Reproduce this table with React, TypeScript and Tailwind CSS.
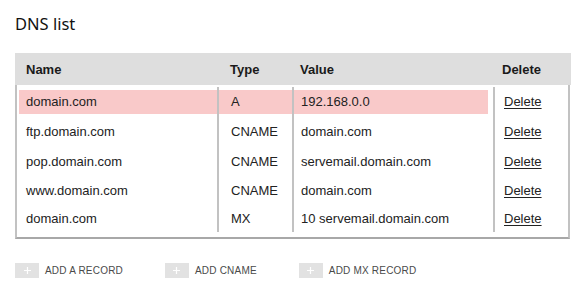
import React from "react";

const rows = [
  { name: "domain.com", type: "A", value: "192.168.0.0", h: "h-[29px]", hl: true },
  { name: "ftp.domain.com", type: "CNAME", value: "domain.com", h: "h-[31px]", hl: false },
  { name: "pop.domain.com", type: "CNAME", value: "servemail.domain.com", h: "h-[29px]", hl: false },
  { name: "www.domain.com", type: "CNAME", value: "domain.com", h: "h-[29px]", hl: false },
  { name: "domain.com", type: "MX", value: "10 servemail.domain.com", h: "h-[27px]", hl: false },
];

function Plus() {
  return (
    <div className="w-[24px] h-[15px] bg-[#e2e2e2] flex items-center justify-center">
      <svg width="9" height="9" viewBox="0 0 9 9">
        <path d="M4.5 1v7M1 4.5h7" stroke="#ffffff" strokeWidth="1.2" />
      </svg>
    </div>
  );
}

function AddBtn({ label }: { label: string }) {
  return (
    <div className="flex items-center gap-[6px]">
      <Plus />
      <span className="text-[10px] leading-[15px] tracking-[0.2px] text-[#4a4a4a]" style={{ fontFamily: '"Liberation Sans", Arial, sans-serif' }}>
        {label}
      </span>
    </div>
  );
}

export default function App() {
  const arial = { fontFamily: '"Liberation Sans", Arial, sans-serif' };
  return (
    <div className="w-[588px] h-[295px] bg-white text-[#222]" style={arial}>
      <div className="pt-[12px] pl-[15px] text-[16.5px] leading-[24px] text-[#111]" style={{ fontFamily: '"Noto Sans", "Open Sans", sans-serif' }}>
        DNS list
      </div>
      <div className="mt-[17px] ml-[15px] w-[556px]">
        <div className="grid grid-cols-[202px_75px_201px_78px] h-[32px] items-center pt-[1px] bg-[#dedede] text-[13px] font-bold text-[#1a1a1a]">
          <div className="pl-[11px]">Name</div>
          <div className="pl-[13px]">Type</div>
          <div className="pl-[8px]">Value</div>
          <div className="pl-[9px]">Delete</div>
        </div>
        <div className="w-[555px] border-l-2 border-r-2 border-b-2 border-l-[#c2c2c2] border-r-[#c2c2c2] border-b-[#a8a8a8] pt-[2px] pb-[5px] flex text-[13px]">
          <div className="w-[200px] flex flex-col">
            {rows.map((r, i) => (
              <div key={i} className={`${r.h} flex items-center pl-[2px]`}>
                <div className={`h-[24px] w-full flex items-center pl-[7px] ${r.hl ? "bg-[#f9c9c9]" : ""}`}>{r.name}</div>
              </div>
            ))}
          </div>
          <div className="w-[75px] border-l-2 border-[#c2c2c2] flex flex-col">
            {rows.map((r, i) => (
              <div key={i} className={`${r.h} flex items-center`}>
                <div className={`h-[24px] w-full flex items-center pl-[12px] ${r.hl ? "bg-[#f9c9c9]" : ""}`}>{r.type}</div>
              </div>
            ))}
          </div>
          <div className="w-[201px] border-l-2 border-[#c2c2c2] flex flex-col">
            {rows.map((r, i) => (
              <div key={i} className={`${r.h} flex items-center pr-[5px]`}>
                <div className={`h-[24px] w-full flex items-center pl-[7px] ${r.hl ? "bg-[#f9c9c9]" : ""}`}>{r.value}</div>
              </div>
            ))}
          </div>
          <div className="flex-1 border-l-2 border-[#c2c2c2] flex flex-col">
            {rows.map((r, i) => (
              <div key={i} className={`${r.h} flex items-center pl-[9px]`}>
                <span className="underline underline-offset-2">Delete</span>
              </div>
            ))}
          </div>
        </div>
      </div>
      <div className="mt-[24px] ml-[15px] flex gap-[42px]">
        <AddBtn label="ADD A RECORD" />
        <AddBtn label="ADD CNAME" />
        <AddBtn label="ADD MX RECORD" />
      </div>
    </div>
  );
}
